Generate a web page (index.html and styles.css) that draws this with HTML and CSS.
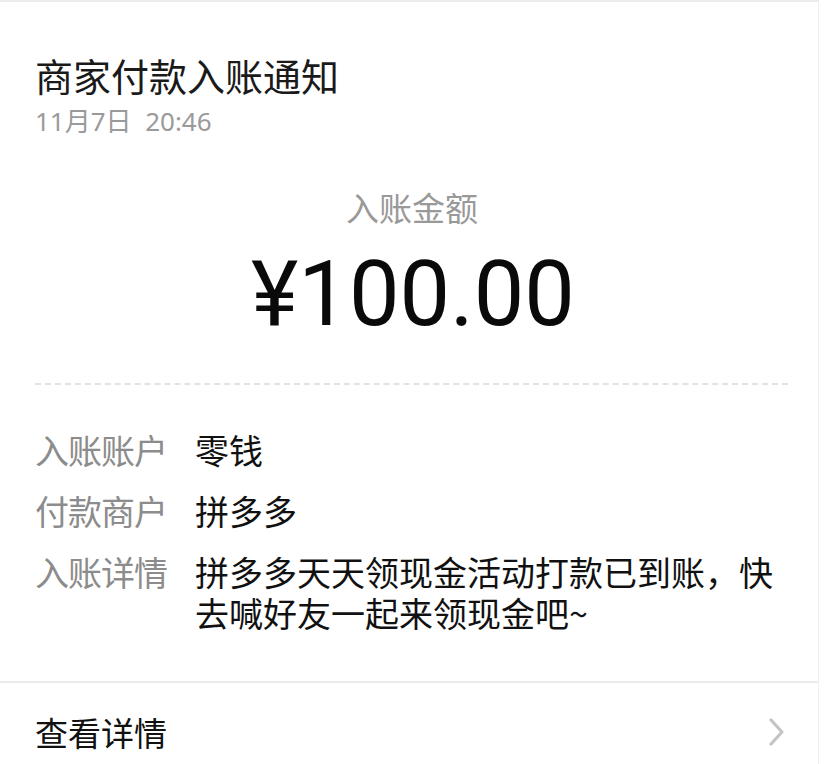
FILE: index.html
```html
<!DOCTYPE html>
<html lang="zh-CN">
<head>
<meta charset="utf-8">
<title>商家付款入账通知</title>
<link rel="stylesheet" href="styles.css">
</head>
<body>
<div class="card">
  <div class="head">
    <div class="title">商家付款入账通知</div>
    <div class="date">11月7日&nbsp;&nbsp;20:46</div>
  </div>
  <div class="amount-block">
    <div class="amount-label">入账金额</div>
    <div class="amount">¥100.00</div>
  </div>
  <div class="dash"></div>
  <div class="rows">
    <div class="row"><div class="label">入账账户</div><div class="value">零钱</div></div>
    <div class="row"><div class="label">付款商户</div><div class="value">拼多多</div></div>
    <div class="row"><div class="label">入账详情</div><div class="value">拼多多天天领现金活动打款已到账，快去喊好友一起来领现金吧~</div></div>
  </div>
  <div class="footer">
    <div class="footer-text">查看详情</div>
    <svg class="chev" width="18" height="30" viewBox="0 0 18 30"><path d="M3 3 L14 15 L3 27" fill="none" stroke="#c4c4c4" stroke-width="3.2" stroke-linecap="round" stroke-linejoin="round"/></svg>
  </div>
</div>
</body>
</html>
```
FILE: styles.css
```css
html, body {
  margin: 0;
  padding: 0;
  background: #ffffff;
}
body {
  font-family: "Noto Sans CJK SC", "Noto Sans", sans-serif;
  color: #111;
}
.card {
  width: 819px;
  height: 764px;
  border-top: 2px solid #ececec;
  border-right: 1px solid #f0f0f0;
  box-sizing: border-box;
  overflow: hidden;
}
.head {
  padding: 50px 35px 0;
}
.title {
  font-size: 38px;
  line-height: 46px;
  color: #1a1a1a;
}
.date {
  font-family: "Noto Sans", "Noto Sans CJK SC", sans-serif;
  font-size: 26px;
  line-height: 32px;
  margin-top: 7px;
  color: #9a9a9a;
}
.amount-block {
  text-align: center;
  padding-top: 50px;
}
.amount-label {
  font-size: 33px;
  line-height: 40px;
  color: #999;
  padding-left: 6px;
}
.amount {
  font-family: "Roboto", "Noto Sans", sans-serif;
  font-size: 90px;
  line-height: 100px;
  margin-top: 18px;
  color: #0a0a0a;
  padding-left: 8px;
}
.dash {
  margin: 38px 30px 0 35px;
  border-top: 2px dashed #e2e2e2;
}
.rows {
  padding: 44px 35px 0;
  display: flex;
  flex-direction: column;
  gap: 20px;
}
.row {
  display: flex;
  font-size: 34px;
  line-height: 41px;
}
.label {
  width: 160px;
  flex-shrink: 0;
  color: #8c8c8c;
  letter-spacing: -1px;
}
.value {
  width: 592px;
  color: #111;
}
.footer {
  margin-top: 48px;
  border-top: 2px solid #ebebeb;
  display: flex;
  align-items: center;
  justify-content: space-between;
  padding: 0 32px 0 35px;
  height: 104px;
}
.footer-text {
  font-size: 33px;
  line-height: 40px;
  color: #111;
  margin-top: -6px;
}
.chev {
  display: block;
  margin-top: -6px;
}
```
